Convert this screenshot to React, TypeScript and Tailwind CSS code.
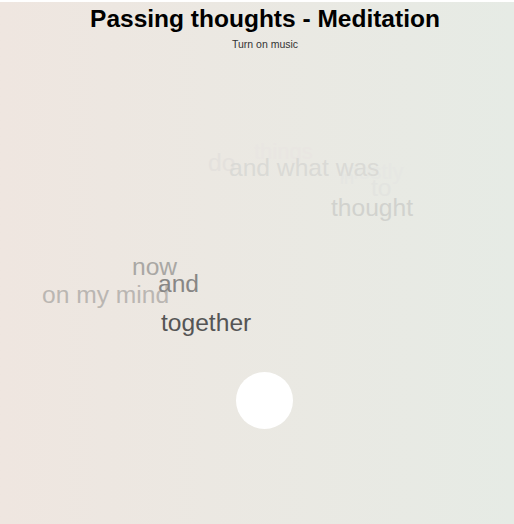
import React from "react";

type Word = { text: string; x: number; y: number; color: string; size?: number };

const words: Word[] = [
  { text: "things", x: 254, y: 140, color: "#e9e6e2", size: 22 },
  { text: "do", x: 208, y: 151, color: "#e4e1dd" },
  { text: "mostly", x: 340, y: 160, color: "#e6e7e3", size: 22 },
  { text: "in", x: 340, y: 166, color: "#e5e6e2", size: 18 },
  { text: "and what was", x: 229, y: 156, color: "#dadad6" },
  { text: "to", x: 371, y: 176, color: "#e3e4e0" },
  { text: "thought", x: 331, y: 196, color: "#d1d2ce" },
  { text: "now", x: 132, y: 255, color: "#a9a7a4" },
  { text: "on my mind", x: 42, y: 283, color: "#bab6b2" },
  { text: "and", x: 158, y: 272, color: "#878685" },
  { text: "together", x: 161, y: 311, color: "#555555" },
];

export default function App() {
  return (
    <div
      className="relative w-[514px] h-[524px] overflow-hidden border-t-[2px] border-white bg-gradient-to-r from-[#efe6e0] to-[#e6ebe5]"
      style={{ fontFamily: '"Liberation Sans", Arial, sans-serif' }}
    >
      <div className="flex flex-col items-center pt-[3px] pl-[16px]">
        <h1 className="text-[24.5px] leading-[28px] font-bold text-black">
          Passing thoughts - Meditation
        </h1>
        <button className="mt-[5px] text-[10.5px] leading-[13px] text-[#333]">
          Turn on music
        </button>
      </div>
      {words.map((w, i) => (
        <div
          key={i}
          className="absolute whitespace-nowrap leading-[24px]"
          style={{ left: w.x, top: w.y - 2, color: w.color, fontSize: w.size ?? 24.6 }}
        >
          {w.text}
        </div>
      ))}
      <div className="absolute left-[236px] top-[370px] w-[57px] h-[57px] rounded-full bg-white" />
    </div>
  );
}
